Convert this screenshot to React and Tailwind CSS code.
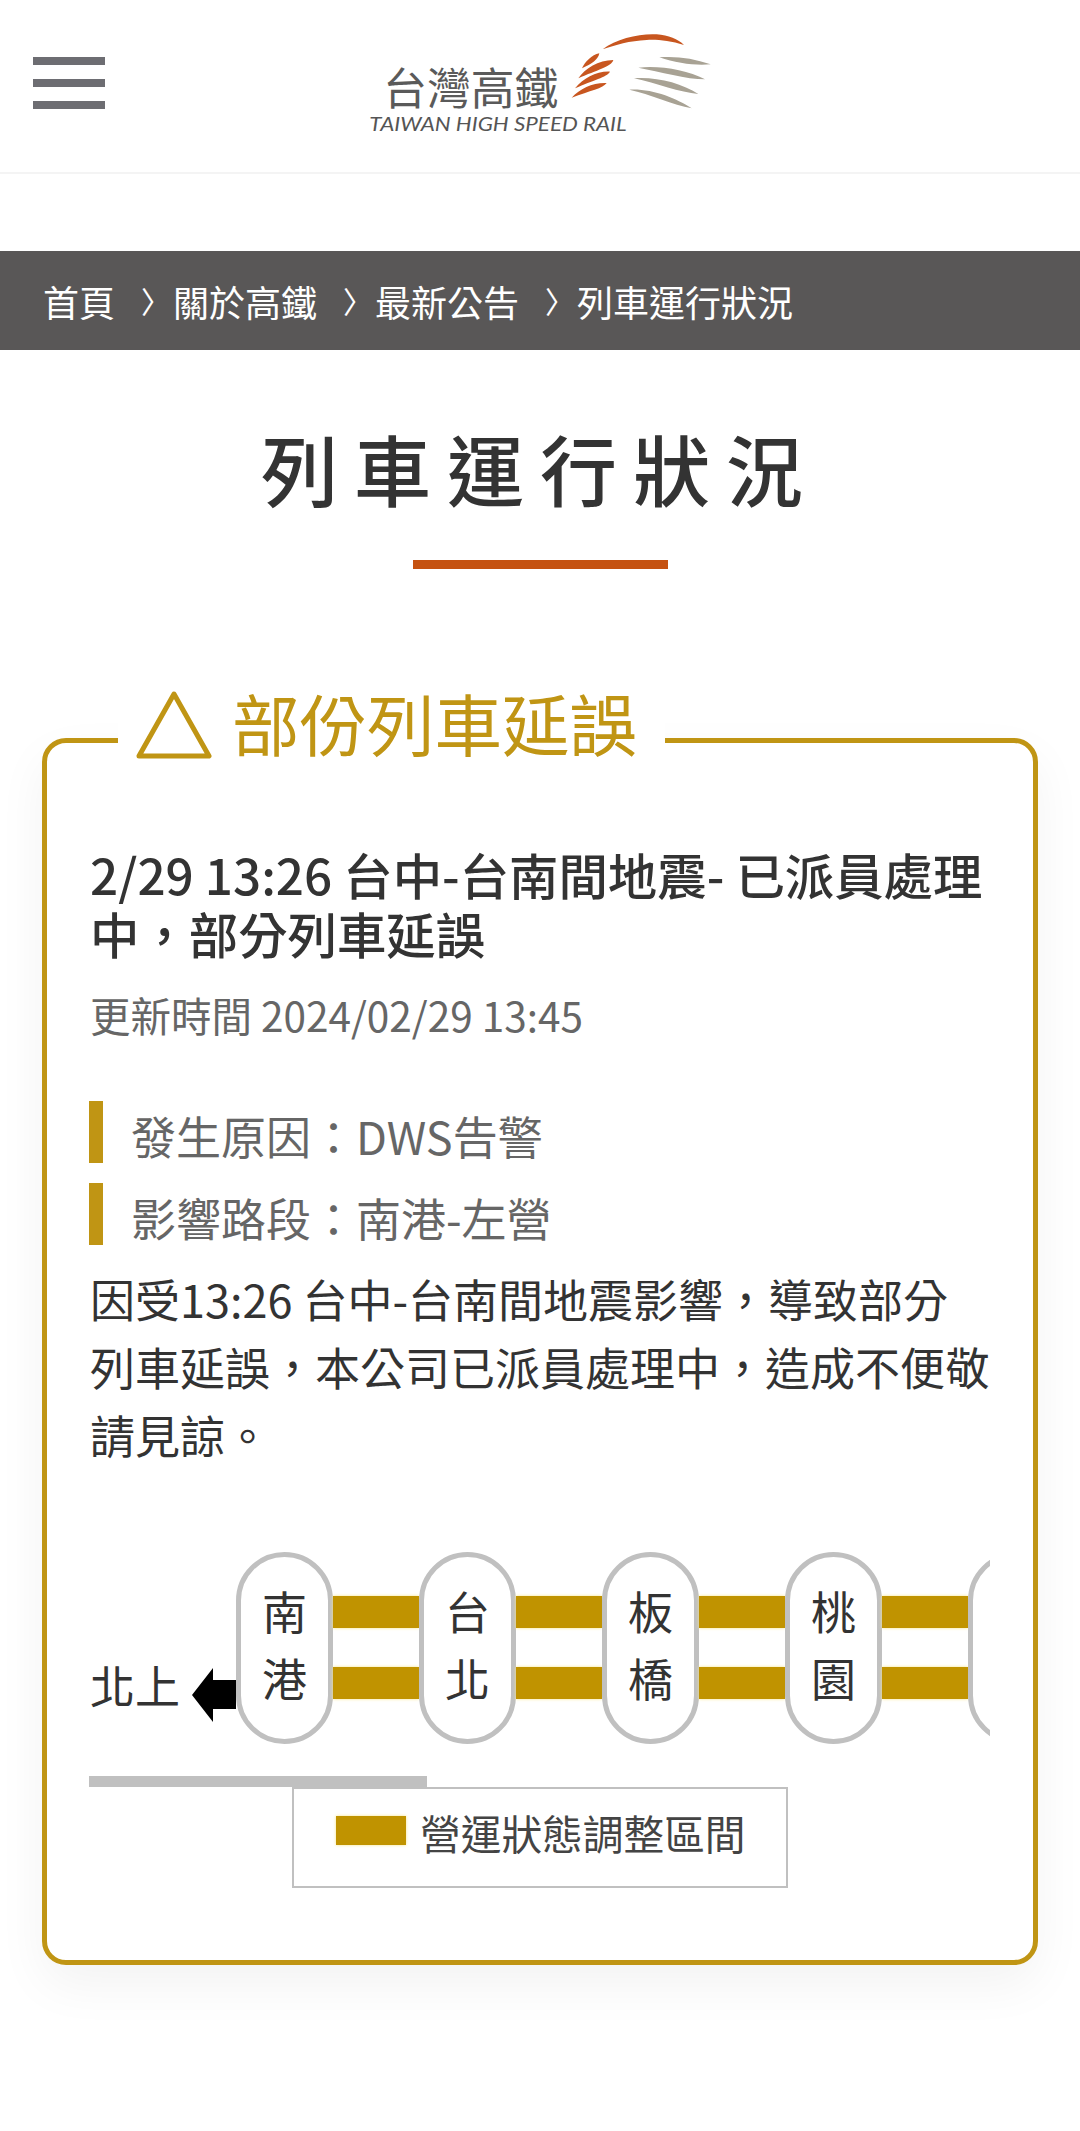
import React from "react";

const cjk = "font-['Noto_Sans_CJK_TC','Noto_Sans',sans-serif]";

const crumbs = ["關於高鐵", "最新公告", "列車運行狀況"];
const stations = [
  ["南", "港"],
  ["台", "北"],
  ["板", "橋"],
  ["桃", "園"],
  ["新", "竹"],
];

function Logo() {
  return (
    <svg width="400" height="130" viewBox="0 0 1200 390" className="block">
      <g fill="#c8561f">
        <path d="M788 88C830 55 900 40 950 43C985 45 1015 58 1032 75C990 62 950 58 920 60C870 62 825 75 788 88Z" />
        <path d="M726 145C735 125 755 105 778 100C775 118 755 132 726 145Z" />
        <path d="M715 175C735 145 775 120 820 120C815 140 770 150 715 175Z" />
        <path d="M705 205C730 175 770 153 810 155C800 172 760 180 705 205Z" />
        <path d="M695 233C720 205 760 187 800 189C790 205 750 212 695 233Z" />
      </g>
      <g fill="#a8a294">
        <path d="M958 112C1010 108 1060 115 1112 133C1070 138 1010 130 958 112Z" />
        <path d="M895 143C960 136 1040 150 1095 178C1040 178 960 155 895 143Z" />
        <path d="M882 175C950 170 1025 190 1075 222C1020 218 950 190 882 175Z" />
        <path d="M868 209C935 205 1010 235 1055 265C1000 255 930 222 868 209Z" />
      </g>
      <text x="130" y="255" fontSize="132" fill="#5a5a5a" fontWeight="400" textLength="525" lengthAdjust="spacingAndGlyphs" fontFamily="'Noto Sans CJK TC', sans-serif">台灣高鐵</text>
      <text x="88" y="334" fontSize="60" fill="#555" fontStyle="italic" textLength="772" lengthAdjust="spacingAndGlyphs" fontFamily="Lato, sans-serif">TAIWAN HIGH SPEED RAIL</text>
    </svg>
  );
}

function Pill({ chars }) {
  return (
    <div className="flex h-[192px] w-[97px] flex-none flex-col items-center justify-center rounded-full border-[5px] border-[#c0c0c0] bg-white pb-[8px] text-[45px] leading-[67px] text-[#333]">
      <span>{chars[0]}</span>
      <span>{chars[1]}</span>
    </div>
  );
}

function Track() {
  return (
    <div className="flex w-[86px] flex-none flex-col gap-[39px] pt-[44px]">
      <div className="h-[32px] bg-[#c09300] shadow-[0_0_3px_#f8e58a]"></div>
      <div className="h-[32px] bg-[#c09300] shadow-[0_0_3px_#f8e58a]"></div>
    </div>
  );
}

export default function App() {
  return (
    <div className={`min-h-[2131px] bg-white ${cjk}`}>
      <header className="flex h-[174px] items-start border-b-2 border-[#f4f4f4]">
        <div className="ml-[33px] mt-[57px] flex w-[72px] flex-none flex-col gap-[14px]">
          <div className="h-[8px] bg-[#6d6d72]"></div>
          <div className="h-[8px] bg-[#6d6d72]"></div>
          <div className="h-[8px] bg-[#6d6d72]"></div>
        </div>
        <div className="ml-[235px] mt-[20px]">
          <Logo />
        </div>
      </header>

      <nav className="mt-[77px] flex h-[99px] items-center bg-[#595757] pl-[43px] text-[36px] text-white">
        <span>首頁</span>
        {crumbs.map(c => (
          <React.Fragment key={c}>
            <span className="ml-[26px] w-[32px] text-[30px]">〉</span>
            <span>{c}</span>
          </React.Fragment>
        ))}
      </nav>

      <h1 className="mt-[68px] text-center text-[77px] font-medium leading-[100px] tracking-[16px] text-[#333]">列車運行狀況</h1>
      <div className="mx-auto mt-[42px] h-[9px] w-[255px] bg-[#c55211]"></div>

      <section className="mx-[42px] mt-[169px] rounded-[24px] border-[5px] border-[#c09514] px-[43px] pb-[72px] shadow-[0_20px_50px_rgba(0,0,0,0.05)]">
        <div className="-mt-[59px] ml-[28px] flex h-[84px] w-[547px] items-center bg-white pl-[18px]">
          <svg width="76" height="70" viewBox="0 0 76 70" className="mb-[2px] flex-none">
            <path d="M38 4L73 66H3Z" fill="none" stroke="#c09514" strokeWidth="5" strokeLinejoin="round" />
          </svg>
          <span className="mb-[8px] ml-[20px] text-[67.5px] leading-[84px] text-[#c09514]">部份列車延誤</span>
        </div>

        <h2 className="mt-[77px] text-[49.4px] font-medium leading-[58.5px] text-[#333]">2/29 13:26 台中-台南間地震- 已派員處理中，部分列車延誤</h2>
        <p className="mt-[23px] text-[40.5px] leading-[60px] text-[#666]">更新時間 2024/02/29 13:45</p>

        <div className="-ml-[1px] mt-[56px] flex h-[62px] items-center border-l-[14px] border-[#c09514] pl-[28px] pt-[8px] text-[45px] text-[#666]">發生原因：DWS告警</div>
        <div className="-ml-[1px] mt-[20px] flex h-[62px] items-center border-l-[14px] border-[#c09514] pl-[28px] pt-[8px] text-[45px] text-[#666]">影響路段：南港-左營</div>

        <p className="mt-[20px] text-[45px] leading-[68px] text-[#333]">因受13:26 台中-台南間地震影響，導致部分列車延誤，本公司已派員處理中，造成不便敬請見諒。</p>

        <div className="mt-[83px] flex overflow-hidden">
          <div className="flex h-[192px] flex-none items-end pb-[25px]">
            <span className="text-[45px] leading-[68px] text-[#333]">北上</span>
            <svg width="44" height="54" viewBox="0 0 44 54" className="-mb-[3px] ml-[12px] flex-none">
              <path d="M0 27L21 0V12H44V41H21V54Z" fill="#000" />
            </svg>
          </div>
          {stations.map((s, i) => (
            <React.Fragment key={s[0]}>
              <Pill chars={s} />
              {i < stations.length - 1 && <Track />}
            </React.Fragment>
          ))}
        </div>

        <div className="-ml-[1px] mt-[32px] h-[11px] w-[338px] bg-[#c0c0c0]"></div>

        <div className="mx-auto flex h-[101px] w-[496px] items-start gap-[14px] border-2 border-[#c0c0c0] pl-[42px] pt-[19px]">
          <div className="mt-[8px] h-[29px] w-[70px] flex-none bg-[#c09300] shadow-[0_0_3px_#f8e58a]"></div>
          <span className="text-[40.7px] leading-[50px] text-[#444]">營運狀態調整區間</span>
        </div>
      </section>
    </div>
  );
}
